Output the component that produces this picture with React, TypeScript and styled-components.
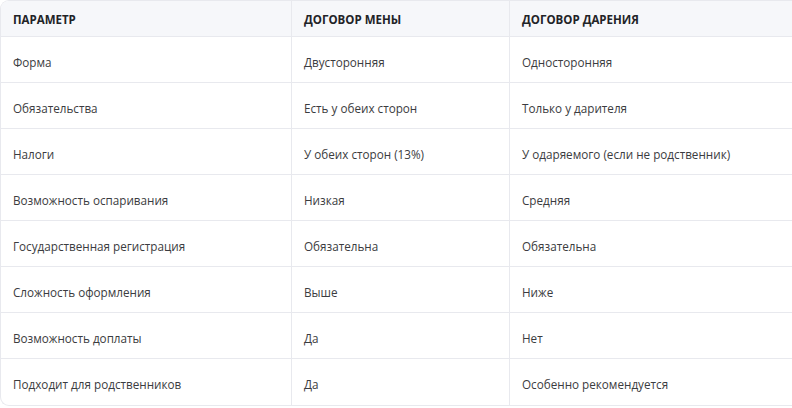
import React from "react";
import styled, { createGlobalStyle } from "styled-components";

const Global = createGlobalStyle`
  html, body { margin: 0; padding: 0; background: #ffffff; }
  body { font-family: "Open Sans", "Noto Sans", sans-serif; }
`;

const Wrap = styled.div`
  width: 792px;
  overflow: hidden;
`;

const Table = styled.table`
  width: 800px;
  border-collapse: separate;
  border-spacing: 0;
  border: 1px solid #e8e9ee;
  border-right: none;
  border-radius: 9px 0 0 9px;
  table-layout: fixed;
`;

const Th = styled.th<{ $w?: number; $first?: boolean }>`
  ${(p) => (p.$w ? `width: ${p.$w}px;` : "")}
  height: 36px;
  padding: 2px 12px 0;
  text-align: left;
  background: #f6f7fa;
  color: #222327;
  font-size: 11.5px;
  font-weight: 700;
  border-bottom: 1px solid #e8e9ee;
  ${(p) => (p.$first ? "" : "border-left: 1px solid #e8e9ee;")}
  ${(p) => (p.$first ? "border-top-left-radius: 8px;" : "")}
  box-sizing: border-box;
`;

const Td = styled.td<{ $first?: boolean; $last?: boolean }>`
  height: 46px;
  padding: 4px 12px 0;
  color: #3b3c40;
  font-size: 11.7px;
  font-weight: 400;
  ${(p) => (p.$last ? "" : "border-bottom: 1px solid #e8e9ee;")}
  ${(p) => (p.$first ? "" : "border-left: 1px solid #e8e9ee;")}
  box-sizing: border-box;
  white-space: nowrap;
`;

const rows: [string, string, string][] = [
  ["Форма", "Двусторонняя", "Односторонняя"],
  ["Обязательства", "Есть у обеих сторон", "Только у дарителя"],
  ["Налоги", "У обеих сторон (13%)", "У одаряемого (если не родственник)"],
  ["Возможность оспаривания", "Низкая", "Средняя"],
  ["Государственная регистрация", "Обязательна", "Обязательна"],
  ["Сложность оформления", "Выше", "Ниже"],
  ["Возможность доплаты", "Да", "Нет"],
  ["Подходит для родственников", "Да", "Особенно рекомендуется"],
];

export default function App() {
  return (
    <Wrap>
      <Global />
      <Table>
        <thead>
          <tr>
            <Th $first $w={290}>ПАРАМЕТР</Th>
            <Th $w={218}>ДОГОВОР МЕНЫ</Th>
            <Th>ДОГОВОР ДАРЕНИЯ</Th>
          </tr>
        </thead>
        <tbody>
          {rows.map((r, i) => (
            <tr key={i}>
              {r.map((c, j) => (
                <Td key={j} $first={j === 0} $last={i === rows.length - 1}>
                  {c}
                </Td>
              ))}
            </tr>
          ))}
        </tbody>
      </Table>
    </Wrap>
  );
}
